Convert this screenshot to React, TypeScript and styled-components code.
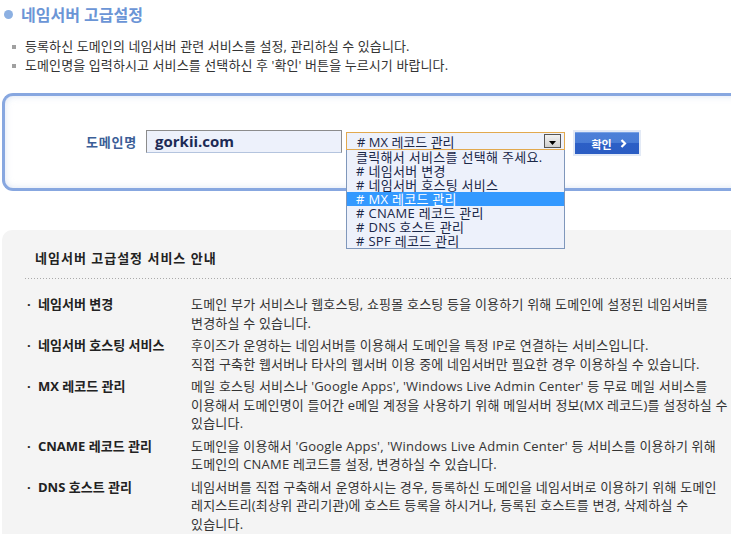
import styled, { createGlobalStyle } from "styled-components";

const GlobalStyle = createGlobalStyle`
  html, body {
    margin: 0;
    padding: 0;
    background: #fff;
    overflow: hidden;
  }
  body {
    font-family: "Open Sans", "Noto Sans CJK KR", sans-serif;
    font-size: 13px;
    color: #333;
  }
`;

const Page = styled.div`
  width: 770px;
  height: 534px;
  overflow: hidden;
`;

const TitleRow = styled.div`
  display: flex;
  align-items: center;
  height: 28px;
  padding-left: 4px;
  gap: 8px;
`;

const TitleDot = styled.span`
  width: 9px;
  height: 9px;
  border-radius: 50%;
  background: #8cb0e2;
`;

const TitleText = styled.h1`
  margin: 0;
  font-size: 16px;
  font-weight: 700;
  color: #6b95d6;
`;

const Notes = styled.ul`
  list-style: none;
  margin: 9px 0 0;
  padding: 0 0 0 12px;
`;

const Note = styled.li`
  display: flex;
  align-items: center;
  gap: 9px;
  line-height: 19px;
  letter-spacing: 0.1px;
  color: #333;
`;

const NoteMark = styled.span`
  width: 4px;
  height: 4px;
  background: #a0a0a0;
`;

const SearchBox = styled.section`
  box-sizing: border-box;
  height: 98px;
  margin: 18px 0 0 2px;
  border: 3px solid #87a7e0;
  border-right: none;
  border-radius: 11px 0 0 11px;
  background: #fff;
  box-shadow: inset 0 0 7px rgba(150, 175, 220, 0.35);
`;

const SearchRow = styled.div`
  display: flex;
  align-items: flex-start;
  padding: 34px 0 0 81px;
`;

const Label = styled.label`
  margin: 1px 9px 0 0;
  line-height: 23px;
  font-weight: 700;
  color: #3b5e97;
  letter-spacing: 0.8px;
`;

const DomainInput = styled.div`
  box-sizing: border-box;
  width: 196px;
  height: 23px;
  padding-left: 8px;
  border: 1px solid #8c8c8c;
  border-bottom-color: #b4c4de;
  background: #edf1fb;
  font-size: 15px;
  font-weight: 700;
  line-height: 20px;
  color: #1c2a55;
`;

const SelectWrap = styled.div`
  position: relative;
  margin: 2px 0 0 4px;
  width: 219px;
`;

const SelectBox = styled.div`
  box-sizing: border-box;
  display: flex;
  align-items: center;
  justify-content: space-between;
  height: 18px;
  padding: 0 3px 0 10px;
  border: 1px solid #e2a94e;
  background: #edf1fb;
  color: #1a2748;
`;

const ArrowButton = styled.span`
  box-sizing: border-box;
  display: flex;
  align-items: flex-end;
  justify-content: center;
  width: 17px;
  height: 14px;
  padding-bottom: 2px;
  border: 1px solid #555;
  background: linear-gradient(#f2f2f2, #cfcfcf);
`;

const OptionList = styled.ul`
  position: absolute;
  top: 100%;
  left: 0;
  z-index: 2;
  box-sizing: border-box;
  width: 100%;
  margin: 0;
  padding: 0;
  list-style: none;
  border: 1px solid #7f97bb;
  border-top: none;
  background: #edf1fb;
`;

const OptionItem = styled.li<{ $active?: boolean }>`
  height: 14px;
  line-height: 14px;
  padding-left: 9px;
  white-space: nowrap;
  letter-spacing: 0.3px;
  background: ${(p) => (p.$active ? "#3399ff" : "transparent")};
  color: ${(p) => (p.$active ? "#fff" : "#1a2748")};
`;

const ConfirmButton = styled.button`
  margin: 0 0 0 8px;
  padding: 2px;
  border: none;
  background: #e3eaf6;
  cursor: pointer;
`;

const ConfirmFace = styled.span`
  box-sizing: border-box;
  display: flex;
  align-items: center;
  justify-content: center;
  gap: 8px;
  width: 64px;
  height: 22px;
  padding-left: 4px;
  border-top: 1px solid #76a0e4;
  background: linear-gradient(#4c80d8 0%, #4a7dd6 45%, #2c5fc6 50%, #2b5dc3 100%);
  font-family: "Noto Sans CJK KR", sans-serif;
  font-size: 11px;
  font-weight: 700;
  color: #fff;
`;

const InfoBox = styled.section`
  margin: 39px 0 0 2px;
  height: 320px;
  padding: 19px 0 0 23px;
  border-radius: 10px 0 0 0;
  background: #f4f4f4;
`;

const InfoTitle = styled.h2`
  margin: 0 0 0 10px;
  font-size: 13px;
  font-weight: 700;
  line-height: 18px;
  letter-spacing: 1px;
  color: #222;
`;

const DottedRule = styled.div`
  height: 1px;
  margin: 11px 0 16px;
  background-image: linear-gradient(to right, #aaa 1px, transparent 1px);
  background-size: 3px 1px;
`;

const InfoRow = styled.div`
  display: grid;
  grid-template-columns: 166px 1fr;
  margin-bottom: 4px;
  line-height: 18.5px;
`;

const RowLabel = styled.div`
  display: flex;
  padding-left: 2px;
  font-weight: 700;
  color: #222;
`;

const RowDot = styled.span`
  width: 11px;
`;

const RowText = styled.div`
  color: #333;
  white-space: nowrap;
  letter-spacing: 0.2px;
`;

const options = [
  "클릭해서 서비스를 선택해 주세요.",
  "# 네임서버 변경",
  "# 네임서버 호스팅 서비스",
  "# MX 레코드 관리",
  "# CNAME 레코드 관리",
  "# DNS 호스트 관리",
  "# SPF 레코드 관리",
];

const rows = [
  {
    label: "네임서버 변경",
    lines: [
      "도메인 부가 서비스나 웹호스팅, 쇼핑몰 호스팅 등을 이용하기 위해 도메인에 설정된 네임서버를",
      "변경하실 수 있습니다.",
    ],
  },
  {
    label: "네임서버 호스팅 서비스",
    lines: [
      "후이즈가 운영하는 네임서버를 이용해서 도메인을 특정 IP로 연결하는 서비스입니다.",
      "직접 구축한 웹서버나 타사의 웹서버 이용 중에 네임서버만 필요한 경우 이용하실 수 있습니다.",
    ],
  },
  {
    label: "MX 레코드 관리",
    lines: [
      "메일 호스팅 서비스나 'Google Apps', 'Windows Live Admin Center' 등 무료 메일 서비스를",
      "이용해서 도메인명이 들어간 e메일 계정을 사용하기 위해 메일서버 정보(MX 레코드)를 설정하실 수",
      "있습니다.",
    ],
  },
  {
    label: "CNAME 레코드 관리",
    lines: [
      "도메인을 이용해서 'Google Apps', 'Windows Live Admin Center' 등 서비스를 이용하기 위해",
      "도메인의 CNAME 레코드를 설정, 변경하실 수 있습니다.",
    ],
  },
  {
    label: "DNS 호스트 관리",
    lines: [
      "네임서버를 직접 구축해서 운영하시는 경우, 등록하신 도메인을 네임서버로 이용하기 위해 도메인",
      "레지스트리(최상위 관리기관)에 호스트 등록을 하시거나, 등록된 호스트를 변경, 삭제하실 수",
      "있습니다.",
    ],
  },
];

export default function App() {
  return (
    <Page>
      <GlobalStyle />
      <TitleRow>
        <TitleDot />
        <TitleText>네임서버 고급설정</TitleText>
      </TitleRow>
      <Notes>
        <Note>
          <NoteMark />
          등록하신 도메인의 네임서버 관련 서비스를 설정, 관리하실 수 있습니다.
        </Note>
        <Note>
          <NoteMark />
          도메인명을 입력하시고 서비스를 선택하신 후 '확인' 버튼을 누르시기 바랍니다.
        </Note>
      </Notes>

      <SearchBox>
        <SearchRow>
          <Label>도메인명</Label>
          <DomainInput>gorkii.com</DomainInput>
          <SelectWrap>
            <SelectBox>
              <span># MX 레코드 관리</span>
              <ArrowButton>
                <svg width="7" height="4" viewBox="0 0 7 4">
                  <path d="M0 0h7L3.5 4z" fill="#000" />
                </svg>
              </ArrowButton>
            </SelectBox>
            <OptionList>
              {options.map((o, i) => (
                <OptionItem key={o} $active={i === 3}>
                  {o}
                </OptionItem>
              ))}
            </OptionList>
          </SelectWrap>
          <ConfirmButton>
            <ConfirmFace>
              확인
              <svg width="7" height="9" viewBox="0 0 7 9">
                <path d="M1.5 1l3.5 3.5L1.5 8" stroke="#fff" strokeWidth="2.2" fill="none" />
              </svg>
            </ConfirmFace>
          </ConfirmButton>
        </SearchRow>
      </SearchBox>

      <InfoBox>
        <InfoTitle>네임서버 고급설정 서비스 안내</InfoTitle>
        <DottedRule />
        {rows.map((r) => (
          <InfoRow key={r.label}>
            <RowLabel>
              <RowDot>·</RowDot>
              {r.label}
            </RowLabel>
            <RowText>
              {r.lines.map((l) => (
                <div key={l}>{l}</div>
              ))}
            </RowText>
          </InfoRow>
        ))}
      </InfoBox>
    </Page>
  );
}
